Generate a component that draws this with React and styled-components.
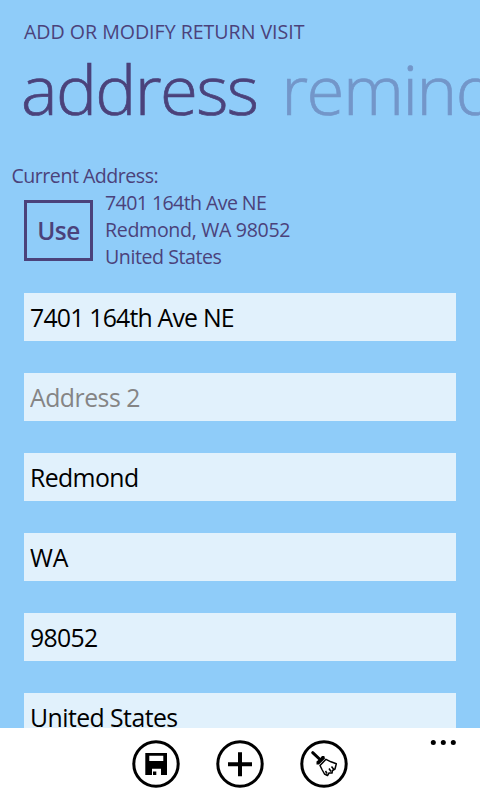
import React from "react";
import styled, { createGlobalStyle } from "styled-components";

const ink = "#4b427b";
const sky = "#8fccf9";

const GlobalStyle = createGlobalStyle`
  *, *::before, *::after { box-sizing: border-box; }
  body { margin: 0; background: ${sky}; }
  button, input { font-family: inherit; margin: 0; border-radius: 0; }
`;

const Phone = styled.div`
  display: flex;
  flex-direction: column;
  width: 480px;
  height: 800px;
  overflow: hidden;
  background: ${sky};
  color: ${ink};
  font-family: "Open Sans", "Noto Sans", sans-serif;
`;

const Page = styled.main`
  flex: 1;
  min-height: 0;
  overflow: hidden;
  padding-top: 18px;
`;

const AppTitle = styled.div`
  padding-left: 24px;
  font-size: 19.6px;
  line-height: 28px;
  letter-spacing: -0.03px;
  white-space: nowrap;
`;

const PivotHeaders = styled.nav`
  display: flex;
  gap: 24px;
  padding-left: 21px;
`;

const PivotTitle = styled.span`
  flex: none;
  font-size: 69px;
  font-weight: 300;
  line-height: 84px;
  letter-spacing: ${(p) => (p.$active ? "-1.65px" : "-1.5px")};
  color: ${(p) => (p.$active ? ink : "#7396c9")};
  -webkit-text-stroke: 0.7px currentColor;
`;

const Caption = styled.div`
  margin-top: 32px;
  padding-left: 11.5px;
  font-size: 19.6px;
  line-height: 27px;
  letter-spacing: -0.5px;
`;

const CurrentAddress = styled.section`
  display: flex;
  align-items: flex-start;
  gap: 12px;
  height: 104px;
  padding-left: 24px;
`;

const UseButton = styled.button`
  width: 69px;
  height: 61px;
  margin-top: 11px;
  padding: 0;
  border: 3px solid ${ink};
  background: none;
  color: ${ink};
  font-size: 24.4px;
  font-weight: 600;
  letter-spacing: -0.5px;
`;

const AddressLines = styled.address`
  font-style: normal;
`;

const AddressLine = styled.div`
  font-size: 19.6px;
  line-height: 27px;
  letter-spacing: ${(p) => p.$tracking}px;
  white-space: nowrap;
`;

const Fields = styled.form`
  display: flex;
  flex-direction: column;
  gap: 32px;
  padding: 0 24px;
`;

const Field = styled.input`
  display: block;
  width: 100%;
  height: 48px;
  flex: none;
  padding: 0 6px;
  border: 0;
  outline: 0;
  background: #e1f1fc;
  color: #000;
  font-size: 24.8px;
  letter-spacing: ${(p) => p.$tracking}px;
  &::placeholder { color: #858585; opacity: 1; }
`;

const AppBar = styled.footer`
  display: grid;
  grid-template-columns: 1fr auto 1fr;
  flex: none;
  height: 72px;
  padding: 12px 24px 0;
  background: #fff;
  color: #000;
`;

const Actions = styled.div`
  display: flex;
  grid-column: 2;
  gap: 36px;
`;

const BarButton = styled.button`
  width: 48px;
  height: 48px;
  padding: 0;
  border: 0;
  background: none;
  color: inherit;
`;

const Glyph = styled.svg`
  display: block;
`;

const MoreButton = styled(BarButton)`
  justify-self: end;
  width: 26px;
  height: 6px;
`;

const RoundIcon = ({ children }) => (
  <Glyph width="48" height="48" viewBox="0 0 48 48" fill="none">
    <circle cx="24" cy="24" r="22.2" stroke="currentColor" strokeWidth="3" />
    {children}
  </Glyph>
);

const fields = [
  { label: "Address 1", value: "7401 164th Ave NE", tracking: -0.78 },
  { label: "Address 2", value: "", tracking: -0.5 },
  { label: "City", value: "Redmond", tracking: -0.6 },
  { label: "State", value: "WA", tracking: -0.1 },
  { label: "Postal code", value: "98052", tracking: -0.65 },
  { label: "Country", value: "United States", tracking: -0.55 },
];

export default function App() {
  return (
    <Phone>
      <GlobalStyle />
      <Page>
        <AppTitle>ADD OR MODIFY RETURN VISIT</AppTitle>
        <PivotHeaders>
          <PivotTitle $active>address</PivotTitle>
          <PivotTitle>reminder</PivotTitle>
        </PivotHeaders>
        <Caption>Current Address:</Caption>
        <CurrentAddress>
          <UseButton>Use</UseButton>
          <AddressLines>
            <AddressLine $tracking={-0.6}>7401 164th Ave NE</AddressLine>
            <AddressLine $tracking={-0.33}>Redmond, WA 98052</AddressLine>
            <AddressLine $tracking={-0.45}>United States</AddressLine>
          </AddressLines>
        </CurrentAddress>
        <Fields>
          {fields.map((f) => (
            <Field
              key={f.label}
              aria-label={f.label}
              placeholder={f.label}
              defaultValue={f.value}
              $tracking={f.tracking}
            />
          ))}
        </Fields>
      </Page>
      <AppBar>
        <Actions>
          <BarButton aria-label="save">
            <RoundIcon>
              <path
                fill="currentColor"
                fillRule="evenodd"
                d="M13.3 13H35V35H13.3ZM17.3 15.7V21H31.3V15.7ZM20 28.7V35H29V28.7Z"
              />
              <path fill="currentColor" d="M21 31.5H24.3V35H21Z" />
            </RoundIcon>
          </BarButton>
          <BarButton aria-label="add">
            <RoundIcon>
              <path stroke="currentColor" strokeWidth="4" d="M24 12.2V36.2M12 24.2H36" />
            </RoundIcon>
          </BarButton>
          <BarButton aria-label="clear">
            <RoundIcon>
              <path stroke="currentColor" strokeWidth="3" strokeLinecap="round" d="M12.7 12.7L20 19.5" />
              <path fill="currentColor" d="M16.5 24.5V21.5L19 19.5L22 16H24.3L25 18.5L19 24.5Z" />
              <path
                stroke="currentColor"
                strokeWidth="1.5"
                strokeLinejoin="round"
                d="M20 25.5L26 19.3L31 21.8L36.3 23.8L35 29L32.5 30.5L32 33L29 33L27.5 35.5L24.5 34L22 29.5ZM25.5 31L27 33.5M29 28.5L31 31.5M31.5 26.5L33.5 29"
              />
            </RoundIcon>
          </BarButton>
        </Actions>
        <MoreButton aria-label="more">
          <Glyph width="26" height="6" viewBox="0 0 26 6" fill="currentColor">
            <circle cx="3.3" cy="2.5" r="2.5" />
            <circle cx="13.3" cy="2.5" r="2.5" />
            <circle cx="23.3" cy="2.5" r="2.5" />
          </Glyph>
        </MoreButton>
      </AppBar>
    </Phone>
  );
}
